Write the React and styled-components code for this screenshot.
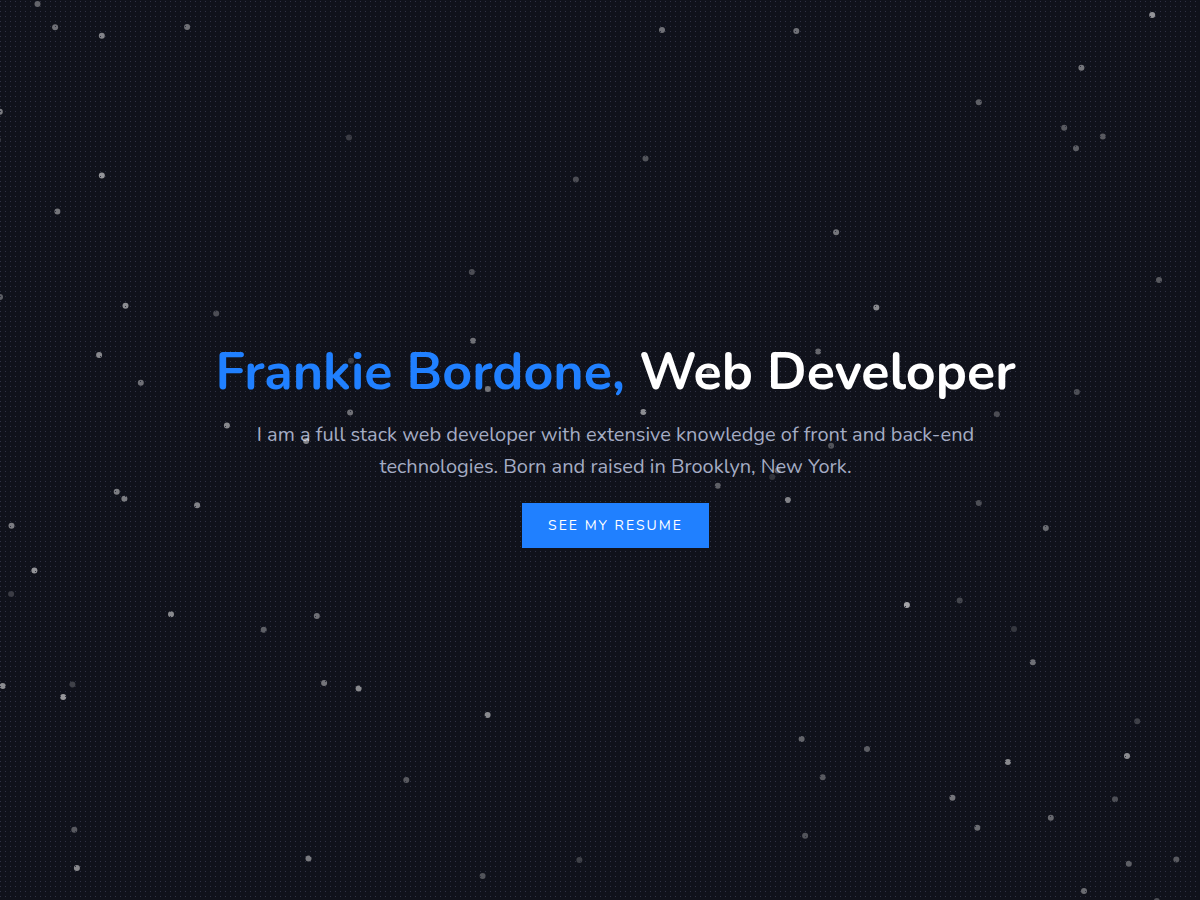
import React from "react";
import styled, { createGlobalStyle } from "styled-components";

const GlobalStyle = createGlobalStyle`
  * { box-sizing: border-box; }
  body { margin: 0; background: #10121b; }
`;

// Each star: x, y, opacity and, for those that float over the text, true.
const STARS = [
  [37.5, 4, 0.35], [55.1, 27.3, 0.4], [101.8, 35.7, 0.48], [187.1, 27, 0.4], [-0.2, 111.7, 0.45],
  [-2.4, 139.8, 0.3], [349, 137.5, 0.18], [101.8, 175.4, 0.55], [57.4, 211.4, 0.42],
  [575.9, 179.6, 0.25], [471.8, 272, 0.25], [0, 297, 0.32], [125.5, 305.8, 0.52],
  [216.2, 313.6, 0.25], [473, 340.7, 0.4], [99.1, 355, 0.5], [351, 360.7, 0.18, true],
  [140.8, 382.7, 0.4], [487.9, 389, 0.42, true], [350.1, 412.6, 0.4], [226.9, 425.4, 0.5],
  [306.1, 441, 0.48, true], [662, 30, 0.4], [796.3, 31, 0.4], [1152.2, 15, 0.55],
  [1081.4, 67.8, 0.42], [978.8, 102.3, 0.33], [1064.2, 127.7, 0.3], [1102.8, 136.4, 0.3],
  [1076, 148.2, 0.32], [645.5, 158.4, 0.28], [836.1, 232.3, 0.42], [1159, 280, 0.3],
  [876.3, 307.4, 0.5], [818.1, 351.4, 0.36], [709.1, 371.6, 0.3], [1076.8, 392, 0.26],
  [996.8, 414.3, 0.25], [643.3, 412, 0.52], [831.1, 445.7, 0.28], [777.6, 470.6, 0.28, true],
  [772.2, 477, 0.15], [717.8, 485.7, 0.33], [787.9, 500, 0.48], [978.8, 503, 0.26],
  [116.7, 491.7, 0.45], [124.4, 498.7, 0.45], [197.1, 505.3, 0.48], [11.5, 525.7, 0.45],
  [34.4, 570.6, 0.55], [11.1, 594, 0.18], [171, 614.3, 0.5], [316.8, 616, 0.4],
  [263.7, 629.7, 0.33], [2.7, 686, 0.52], [72.4, 684.4, 0.2], [63.2, 697, 0.56],
  [324.1, 683, 0.42], [358.6, 688.4, 0.5], [487.6, 715, 0.5], [406.3, 780, 0.3],
  [74.3, 829.7, 0.3], [76.9, 868, 0.5], [308.5, 858.4, 0.44], [482.6, 876, 0.28],
  [579.4, 860, 0.2], [1045.8, 528, 0.38], [906.9, 605, 0.62], [959.7, 600.6, 0.22],
  [1014, 629, 0.16], [1032.8, 662.3, 0.4], [1137.2, 721.3, 0.2], [801.6, 739, 0.35],
  [867, 749, 0.32], [822.7, 777.3, 0.3], [1007.9, 762, 0.5], [1127, 756, 0.52],
  [952.4, 797.7, 0.42], [1115, 799.3, 0.26], [1050.8, 817.7, 0.36], [977.3, 827.7, 0.38],
  [805.1, 835.7, 0.28], [1128.8, 863.7, 0.33], [1176.3, 859.4, 0.3], [1084, 891, 0.38],
  [1156.8, 901, 0.26],
];

const Hero = styled.main`
  position: relative;
  min-height: 100vh;
  display: flex;
  align-items: center;
  justify-content: center;
  padding: 0 0 10px 31px;
  overflow: hidden;
  background: #10121b;
  font-family: Nunito, Lato, sans-serif;
`;

const StarField = styled.svg`
  position: absolute;
  inset: 0;
  width: 100%;
  height: 100%;
  pointer-events: none;
`;

const Intro = styled.section`
  position: relative;
  width: 100%;
  max-width: 860px;
  text-align: center;
`;

const Title = styled.h1`
  margin: 0 0 17px;
  color: #fff;
  font-size: 52px;
  line-height: 60px;
  font-weight: 700;
`;

const Name = styled.span`
  color: #2080ff;
`;

const Summary = styled.p`
  max-width: 740px;
  margin: 0 auto 20px;
  color: #a4acc4;
  font-size: 20px;
  line-height: 32px;
  font-weight: 400;
`;

const ResumeButton = styled.button`
  display: block;
  height: 45px;
  margin: 0 auto;
  padding: 0 26px;
  border: 0;
  background: #2080ff;
  color: #fff;
  font: inherit;
  font-size: 14px;
  font-weight: 400;
  letter-spacing: 2px;
  text-transform: uppercase;
  cursor: pointer;
`;

function Stars({ front = false }) {
  return (
    <StarField aria-hidden="true">
      {STARS.filter((s) => Boolean(s[3]) === front).map(([x, y, o]) => (
        <circle key={`${x}-${y}`} cx={x} cy={y} r="3" fill="#fff" fillOpacity={o} />
      ))}
      {!front && (
        <>
          <defs>
            <pattern id="grain" width="5" height="5" patternUnits="userSpaceOnUse">
              <rect x="0" y="1" width="1" height="1" fill="#303244" />
            </pattern>
          </defs>
          <rect width="100%" height="100%" fill="url(#grain)" />
        </>
      )}
    </StarField>
  );
}

export default function App() {
  return (
    <>
      <GlobalStyle />
      <Hero>
        <Stars />
        <Intro>
          <Title>
            <Name>Frankie Bordone,</Name> Web Developer
          </Title>
          <Summary>
            I am a full stack web developer with extensive knowledge of front and back-end
            technologies. Born and raised in Brooklyn, New York.
          </Summary>
          <ResumeButton type="button">See my resume</ResumeButton>
        </Intro>
        <Stars front />
      </Hero>
    </>
  );
}
